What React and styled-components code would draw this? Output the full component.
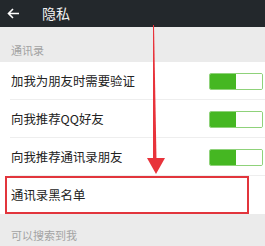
import React from 'react';
import styled, { createGlobalStyle } from 'styled-components';

const GlobalStyle = createGlobalStyle`
  html, body {
    margin: 0;
    padding: 0;
    background: #ebebeb;
  }
  body {
    font-family: "Noto Sans CJK SC", "Noto Sans", sans-serif;
  }
`;

const Screen = styled.div`
  position: relative;
  width: 265px;
  height: 246px;
  overflow: hidden;
  background: #ebebeb;
`;

const TopBar = styled.div`
  display: flex;
  align-items: center;
  height: 27px;
  background: #23282c;
  color: #ffffff;
`;

const Back = styled.div`
  display: flex;
  align-items: center;
  width: 42px;
  padding-left: 7px;
  box-sizing: border-box;
`;

const Title = styled.div`
  font-size: 14px;
  line-height: 27px;
  color: #f2f2f2;
`;

const SectionLabel = styled.div`
  height: ${(p) => p.$h}px;
  display: flex;
  align-items: flex-end;
  padding: 0 11px ${(p) => p.$pb}px;
  box-sizing: border-box;
  font-size: 11px;
  line-height: 16px;
  color: #a3a3a3;
`;

const Group = styled.div`
  background: #ffffff;
`;

const Row = styled.div`
  position: relative;
  display: flex;
  align-items: center;
  justify-content: space-between;
  height: 38px;
  padding: 0 2px 0 11px;
  box-sizing: border-box;
  font-size: 12.4px;
  color: #222222;

  &:not(:last-child)::after {
    content: '';
    position: absolute;
    left: 10px;
    right: 0;
    bottom: 0;
    height: 1px;
    background: #eeeeee;
  }
`;

const Toggle = styled.div`
  display: flex;
  width: 54px;
  height: 17px;
  border-radius: 2px;
  overflow: hidden;
  border: 1px solid #8fd27a;
  box-sizing: border-box;
`;

const Knob = styled.div`
  flex: 0 0 26px;
  background: #45b722;
`;

const Rest = styled.div`
  flex: 1;
  background: #ffffff;
`;

const Highlight = styled.div`
  position: absolute;
  left: 5px;
  top: 176px;
  width: 244px;
  height: 38px;
  border: 2px solid #e2353c;
  box-sizing: border-box;
`;

const ArrowLayer = styled.svg`
  position: absolute;
  left: 0;
  top: 0;
  pointer-events: none;
`;

const rows = [
  { label: '加我为朋友时需要验证', toggle: true },
  { label: '向我推荐QQ好友', toggle: true },
  { label: '向我推荐通讯录朋友', toggle: true },
  { label: '通讯录黑名单', toggle: false },
];

export default function App() {
  return (
    <>
      <GlobalStyle />
      <Screen>
        <TopBar>
          <Back>
            <svg width="13" height="11" viewBox="0 0 13 11">
              <path d="M12 5.5H2M6 1L1.5 5.5L6 10" stroke="#ffffff" strokeWidth="1.6" fill="none" />
            </svg>
          </Back>
          <Title>隐私</Title>
        </TopBar>
        <SectionLabel $h={35} $pb={4}>通讯录</SectionLabel>
        <Group>
          {rows.map((r) => (
            <Row key={r.label}>
              <span>{r.label}</span>
              {r.toggle && (
                <Toggle>
                  <Knob />
                  <Rest />
                </Toggle>
              )}
            </Row>
          ))}
        </Group>
        <SectionLabel $h={33} $pb={4}>可以搜索到我</SectionLabel>
        <Highlight />
        <ArrowLayer width="265" height="246" viewBox="0 0 265 246">
          <polygon points="153,25 154,25 156.5,160 153,160" fill="#e8333b" />
          <polygon points="147,158 165,158 156,174" fill="#e8333b" />
        </ArrowLayer>
      </Screen>
    </>
  );
}
